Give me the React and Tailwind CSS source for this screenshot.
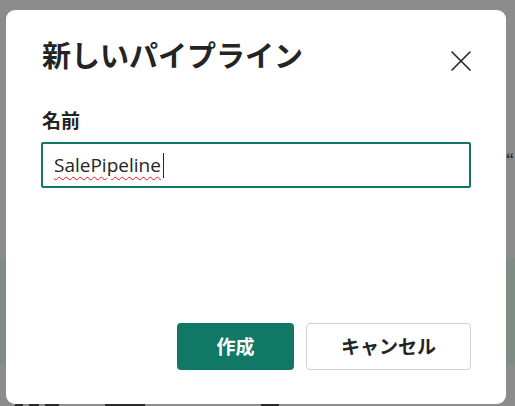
import React from "react";

const jp = { fontFamily: '"Noto Sans CJK JP", "Noto Sans", sans-serif' };

export default function App() {
  return (
    <div className="relative w-[515px] h-[406px] overflow-hidden bg-[#8c8c8c]">
      {/* background page under the overlay */}
      <div className="flex flex-col">
        <div className="h-[148px]" />
        <div className="h-[20px] flex justify-end pr-[1px] text-[#2a2a2a] text-[14px] font-bold leading-[20px]" style={jp}>
          “
        </div>
        <div className="h-[90px]" />
        <div className="h-[107px] bg-[#7e8c86]" />
        <div className="h-[38px]" />
        <div className="flex items-start gap-[6px] pl-[15px]">
          <div className="w-[8px] h-[3px] bg-[#2a2a2a]" />
          <div className="w-[10px] h-[3px] bg-[#2a2a2a]" />
          <div className="w-[14px] h-[3px] bg-[#2a2a2a]" />
          <div className="ml-[40px] w-[40px] h-[3px] bg-[#2a2a2a]" />
          <div className="ml-[110px] w-[18px] h-[3px] bg-[#2a2a2a]" />
        </div>
      </div>

      {/* dialog */}
      <div className="absolute left-[6px] top-[10px] w-[500px] h-[394px] bg-white rounded-[9px] flex flex-col px-[35px] pt-[25px] pb-[34px]">
        <div className="flex items-start justify-between">
          <h1 className="text-[29px] leading-[38px] font-bold text-[#242424] ml-[1px]" style={jp}>
            新しいパイプライン
          </h1>
          <button className="mt-[14px] mr-[-2px] w-[24px] h-[24px] flex items-center justify-center text-[#242424]">
            <svg width="22" height="22" viewBox="0 0 22 22" fill="none">
              <path d="M2 2 L20 20 M20 2 L2 20" stroke="#242424" strokeWidth="1.6" strokeLinecap="round" />
            </svg>
          </button>
        </div>

        <label className="mt-[34px] text-[19px] leading-[26px] font-bold text-[#242424] ml-[1px]" style={jp}>
          名前
        </label>

        <div className="mt-[9px] h-[46px] w-[430px] border-2 border-[#117865] rounded-[2px] flex items-center pl-[11px]">
          <span
            className="text-[19px] text-[#242424] underline decoration-wavy decoration-[#e81123] decoration-[1px] underline-offset-[4px]"
            style={{ fontFamily: '"Open Sans", "Noto Sans", sans-serif' }}
          >
            SalePipeline
          </span>
          <span className="w-[1px] h-[25px] bg-[#242424] ml-[2px]" />
        </div>

        <div className="flex-1" />

        <div className="flex justify-end gap-[12px]">
          <button
            className="w-[117px] h-[47px] rounded-[4px] bg-[#117865] text-white text-[19px] font-bold flex items-center justify-center"
            style={jp}
          >
            作成
          </button>
          <button
            className="w-[165px] h-[47px] rounded-[4px] bg-white border border-[#d1d1d1] text-[#242424] text-[19px] font-bold flex items-center justify-center"
            style={jp}
          >
            キャンセル
          </button>
        </div>
      </div>
    </div>
  );
}
